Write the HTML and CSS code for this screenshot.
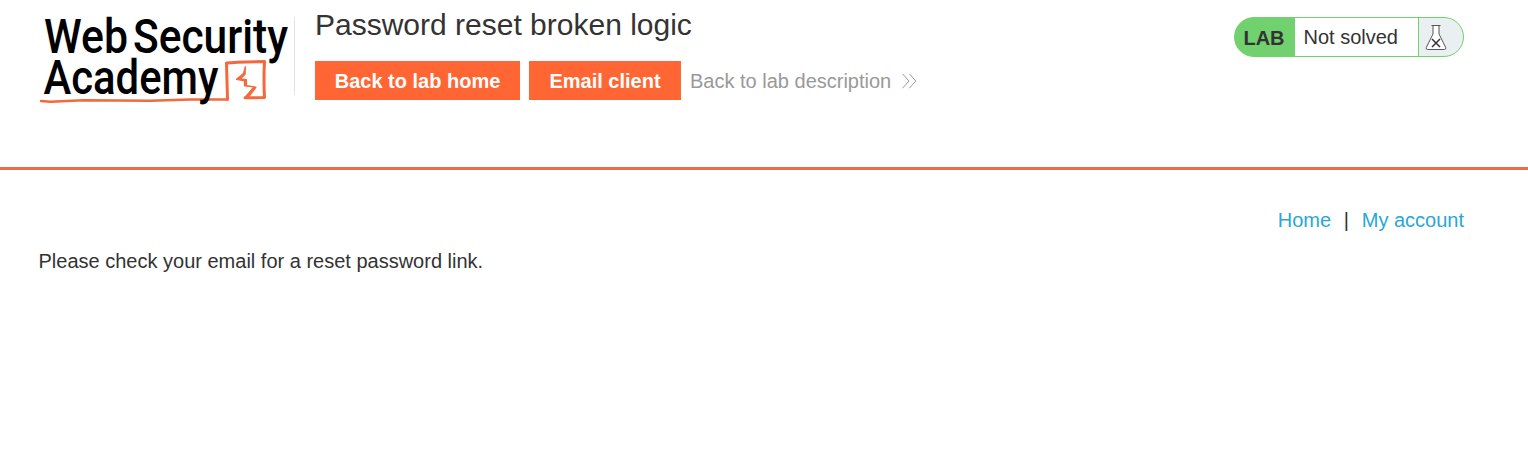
FILE: index.html
```
<!DOCTYPE html>
<html lang="en">
<head>
<meta charset="utf-8">
<title>Password reset broken logic</title>
<link rel="stylesheet" href="styles.css">
</head>
<body>
<header class="lab-header">
  <svg class="logo" viewBox="38 10 256 100" role="img" aria-label="Web Security Academy">
    <g class="logo-line">
      <path stroke-width="2.500" d="M41 101L50 101.800L84 100.300L150 100.800L190 99.500L227 99.500"/>
      <path stroke-width="3" d="M227.500 99.500L226.500 63Q236 62 264.500 61.500Q263.500 80 264.500 97.500L245 97.800"/>
      <path class="bolt" d="M245.300 66.500L243.500 73.500L236.500 79.300L244.500 81L244.500 86L254 86.800L244.500 97.800L248 98L256 87.200L246.500 85.500L246.500 79.500L240.500 78.800L245.200 74Z"/>
    </g>
    <g class="logo-text">
      <text x="44" y="52.700" textLength="84" lengthAdjust="spacingAndGlyphs">Web</text>
      <text x="133" y="52.700" textLength="155" lengthAdjust="spacingAndGlyphs">Security</text>
      <text x="43.500" y="93.700" textLength="175" lengthAdjust="spacingAndGlyphs">Academy</text>
    </g>
  </svg>
  <div class="title-block">
    <h1 class="title">Password reset broken logic</h1>
    <nav class="actions">
      <a class="button home">Back to lab home</a>
      <a class="button email">Email client</a>
      <a class="back">Back to lab description
        <svg class="chevrons" viewBox="0 0 16 16"><path d="M1.500 .8L8 8L1.500 15.200M8.300 .8L14.800 8L8.300 15.200"/></svg>
      </a>
    </nav>
  </div>
  <div class="status">
    <span class="status-lab">LAB</span>
    <span class="status-text">Not solved</span>
    <span class="status-icon">
      <svg class="flask" viewBox="0 0 22 27"><path class="glass" d="M6.500 1.500H15.500M8 1.500V10L1.300 23.500Q.8 25.500 2.500 25.500H19.500Q21.200 25.500 20.700 23.500L14 10V1.500"/><path class="cross" d="M7 15L15 23M15 15L7 23"/></svg>
    </span>
  </div>
</header>
<main class="page">
  <nav class="links"><a class="link">Home</a><span>|</span><a class="link">My account</a></nav>
  <p class="message">Please check your email for a reset password link.</p>
</main>
</body>
</html>
```
FILE: styles.css
```
body {
  margin: 0;
  background: #fff;
  color: #333332;
  font: 20px/24px "Liberation Sans", Arial, sans-serif;
}
.lab-header {
  box-sizing: border-box;
  height: 170px;
  padding: 0 64px 0 38px;
  border-bottom: 3px solid #ee6c45;
  display: flex;
  align-items: flex-start;
}
.logo {
  width: 256px;
  height: 100px;
  margin-top: 10px;
  flex: none;
  overflow: visible;
}
.logo-text {
  font: 500 48px Roboto, sans-serif;
  fill: #000;
}
.logo-line {
  fill: none;
  stroke: #f4693c;
  stroke-linecap: round;
  stroke-linejoin: round;
}
.bolt {
  fill: #f4693c;
  stroke-width: 1.2;
}
.title-block {
  margin-top: 17px;
  height: 78px;
  padding-left: 20px;
  border-left: 1px solid #e3e3e3;
}
.title {
  margin: -10px 0 0;
  font-size: 30px;
  line-height: 36px;
  font-weight: 400;
  white-space: nowrap;
}
.actions {
  display: flex;
  margin-top: 18px;
  gap: 9px;
  line-height: 41px;
  white-space: nowrap;
}
.button {
  height: 39px;
  background: #ff6633;
  color: #fff;
  font-weight: 700;
  text-align: center;
}
.home { width: 205px; }
.email { width: 152px; }
.back {
  display: flex;
  height: 39px;
  gap: 10px;
  color: #999;
}
.chevrons {
  width: 16px;
  height: 16px;
  margin-top: 12px;
  fill: none;
  stroke: #999;
  stroke-width: 1;
}
.status {
  box-sizing: border-box;
  display: flex;
  width: 230px;
  height: 40px;
  margin: 17px 0 0 auto;
  border: 1px solid #70d16e;
  border-radius: 20px;
  background: linear-gradient(to right, #70d16e 50%, #eaeff2 50%) border-box;
  overflow: hidden;
  line-height: 39px;
}
.status-lab {
  box-sizing: border-box;
  width: 60px;
  padding-right: 2px;
  font-weight: 700;
  text-align: center;
  line-height: 41px;
}
.status-text {
  width: 114.5px;
  padding-left: 8.5px;
  background: #fff;
}
.status-icon {
  flex: 1;
  padding-left: 6px;
  border-left: 1px solid #70d16e;
}
.flask {
  display: block;
  width: 22px;
  height: 27px;
  margin-top: 6px;
}
.glass {
  fill: #fff;
  stroke: #555;
  stroke-width: 1;
}
.cross {
  stroke: #333;
  stroke-width: 1.5;
}
.page {
  padding: 38px 64px 0 38.5px;
}
.links {
  display: flex;
  justify-content: flex-end;
  gap: 12.7px;
}
.link { color: #29a7d8; }
.message { margin: 17px 0 0; }
```
